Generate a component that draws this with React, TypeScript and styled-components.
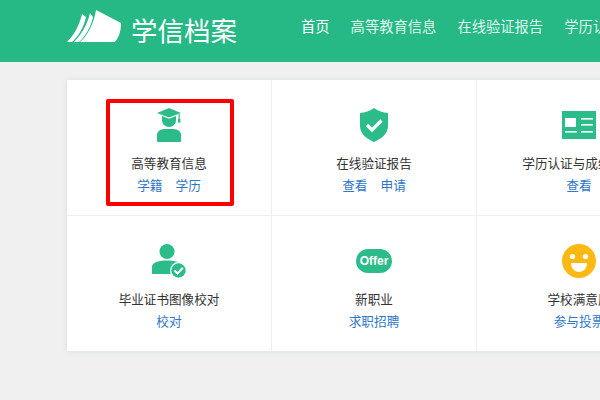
import React from "react";
import styled, { createGlobalStyle } from "styled-components";

const GlobalStyle = createGlobalStyle`
  html, body {
    margin: 0;
    padding: 0;
    height: 100%;
    background: #f0f0f0;
    overflow: hidden;
    font-family: "Liberation Sans", "Noto Sans CJK SC", sans-serif;
  }
`;

const green = "#2bbc8a";

const LogoIcon = () => (
  <svg width="56" height="34" viewBox="0 0 56 34">
    <path d="M0 33 C6 27 12 18 15 5 L19 8 C17 18 11 28 5 33 Z" fill="#fff" />
    <path d="M7 33 C13 27 20 17 23 4 L26 8 C24 18 18 28 12 33 Z" fill="#fff" />
    <path d="M13 33 C21 26 27 14 29 1 L54 14 C54 22 52 28 48 33 Z" fill="#fff" />
  </svg>
);

const GraduateIcon = () => (
  <svg width="34" height="34" viewBox="0 0 34 34">
    <path d="M17 0 L29 5 L17 9.5 L5 5 Z" fill={green} />
    <path d="M10 8 L17 10.8 L24 8 V12 C24 16 21 19 17 19 C13 19 10 16 10 12 Z" fill={green} />
    <rect x="26.6" y="6" width="1.2" height="6" fill={green} />
    <rect x="26" y="11" width="2.4" height="3.6" fill={green} />
    <path d="M5 34 V27 C5 23 9 21 13 21 H21 C25 21 29 23 29 27 V34 Z" fill={green} />
  </svg>
);

const ShieldIcon = () => (
  <svg width="28" height="34" viewBox="0 0 28 34">
    <path d="M14 0 C18 3 23 4.5 28 5 V18 C28 26 21 31 14 34 C7 31 0 26 0 18 V5 C5 4.5 10 3 14 0 Z" fill={green} />
    <path d="M7 17 L12 22 L21.5 12.5" fill="none" stroke="#fff" strokeWidth="3.2" />
  </svg>
);

const CertificateIcon = () => (
  <svg width="34" height="28" viewBox="0 0 34 28">
    <rect width="34" height="28" fill={green} />
    <rect x="3" y="7" width="11" height="9" fill="#fff" />
    <rect x="19" y="7" width="12" height="1.6" fill="#fff" />
    <rect x="19" y="13" width="12" height="1.6" fill="#fff" />
    <rect x="3" y="20" width="12" height="1.6" fill="#fff" />
    <rect x="19" y="20" width="12" height="1.6" fill="#fff" />
  </svg>
);

const PersonCheckIcon = () => (
  <svg width="34" height="34" viewBox="0 0 34 34">
    <circle cx="15" cy="7.5" r="7.5" fill={green} />
    <path d="M0 30 V23 C0 19 5 16.5 15 16.5 C25 16.5 30 19 30 23 V30 Z" fill={green} />
    <circle cx="26.5" cy="26.5" r="8.5" fill="#fff" />
    <circle cx="26.5" cy="26.5" r="7.2" fill={green} />
    <path d="M22.5 26.5 L25.5 29.5 L30.8 23.8" fill="none" stroke="#fff" strokeWidth="2" />
  </svg>
);

const SmileIcon = () => (
  <svg width="34" height="34" viewBox="0 0 34 34">
    <circle cx="17" cy="17" r="17" fill="#fdb913" />
    <circle cx="10.5" cy="12.5" r="2.6" fill="#fff" />
    <circle cx="23.5" cy="12.5" r="2.6" fill="#fff" />
    <path d="M9 19 H25 C25 24.5 21.5 28 17 28 C12.5 28 9 24.5 9 19 Z" fill="#fff" />
  </svg>
);

const services = [
  { title: "高等教育信息", links: ["学籍", "学历"], icon: <GraduateIcon />, marked: true },
  { title: "在线验证报告", links: ["查看", "申请"], icon: <ShieldIcon /> },
  { title: "学历认证与成绩验证", links: ["查看"], icon: <CertificateIcon /> },
  { title: "毕业证书图像校对", links: ["校对"], icon: <PersonCheckIcon /> },
  { title: "新职业", links: ["求职招聘"], icon: <OfferBadgeIcon /> },
  { title: "学校满意度", links: ["参与投票"], icon: <SmileIcon /> },
];

function OfferBadgeIcon() {
  return <OfferBadge>Offer</OfferBadge>;
}

const navItems = ["首页", "高等教育信息", "在线验证报告", "学历认证与成绩验证"];

const App = () => {
  return (
    <>
      <GlobalStyle />
      <Header>
        <Logo>
          <LogoIcon />
          <LogoText>学信档案</LogoText>
        </Logo>
        <Nav>
          {navItems.map((item, i) => (
            <NavItem key={item} $active={i === 0}>
              {item}
            </NavItem>
          ))}
        </Nav>
      </Header>
      <Panel>
        {services.map((s) => (
          <Cell key={s.title}>
            {s.marked && <Marker />}
            <IconBox>{s.icon}</IconBox>
            <Title>{s.title}</Title>
            <Links>
              {s.links.map((l) => (
                <LinkItem key={l}>{l}</LinkItem>
              ))}
            </Links>
          </Cell>
        ))}
      </Panel>
    </>
  );
};

const Header = styled.header`
  display: flex;
  align-items: flex-start;
  height: 62px;
  width: 900px;
  padding-left: 67px;
  background-color: #26b885;
`;
const Logo = styled.div`
  display: flex;
  align-items: flex-start;
  gap: 8px;
  width: 234px;
  padding-top: 9px;
`;
const LogoText = styled.span`
  margin-top: 3px;
  color: #fff;
  font-family: "Noto Sans CJK SC", sans-serif;
  font-size: 26.5px;
  line-height: 36px;
  white-space: nowrap;
`;
const Nav = styled.nav`
  display: flex;
  gap: 21px;
  padding-top: 16px;
`;
const NavItem = styled.a<{ $active?: boolean }>`
  color: ${(p) => (p.$active ? "#fff" : "#dff5ec")};
  font-family: "Noto Sans CJK SC", sans-serif;
  font-size: 14.3px;
  line-height: 20px;
  white-space: nowrap;
`;
const Panel = styled.main`
  display: grid;
  grid-template-columns: repeat(3, 205px);
  grid-template-rows: 136px 135px;
  width: 615px;
  margin: 18px 0 0 67px;
  background-color: #fff;
  box-shadow: 0 0 6px rgba(60, 90, 80, 0.1);
`;
const Cell = styled.div`
  position: relative;
  display: flex;
  flex-direction: column;
  align-items: center;
  box-sizing: border-box;
  padding-top: 28px;
  border-right: 1px solid #eeeeee;
  border-bottom: 1px solid #eeeeee;
  &:nth-child(n + 4) {
    border-bottom: none;
  }
`;
const Marker = styled.div`
  position: absolute;
  left: 39px;
  top: 19px;
  width: 128px;
  height: 107px;
  box-sizing: border-box;
  border: 4px solid #fe0000;
  border-radius: 2px;
`;
const IconBox = styled.div`
  display: flex;
  align-items: center;
  justify-content: center;
  height: 34px;
  svg {
    display: block;
  }
`;
const OfferBadge = styled.div`
  width: 36px;
  height: 24px;
  border-radius: 12px;
  background-color: ${green};
  color: #fff;
  font-family: "Liberation Sans", sans-serif;
  font-size: 12px;
  font-weight: 700;
  line-height: 24px;
  text-align: center;
`;
const Title = styled.div`
  margin-top: 12px;
  color: #333333;
  font-family: "Noto Sans CJK SC", sans-serif;
  font-size: 12.6px;
  line-height: 18px;
  white-space: nowrap;
`;
const Links = styled.div`
  display: flex;
  gap: 13px;
  margin-top: 4px;
`;
const LinkItem = styled.a`
  color: #2f78c8;
  font-family: "Noto Sans CJK SC", sans-serif;
  font-size: 12.7px;
  line-height: 18px;
  white-space: nowrap;
`;

export default App;
